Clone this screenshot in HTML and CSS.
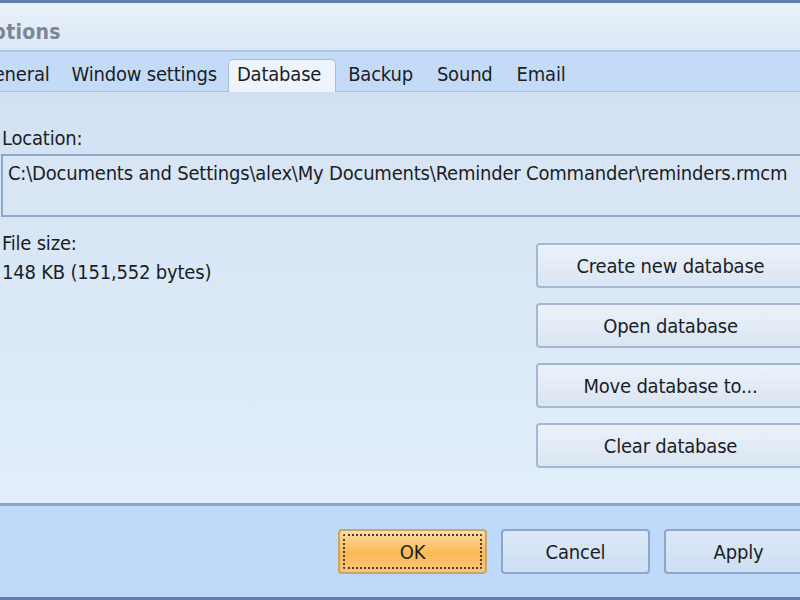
FILE: index.html
```html
<!DOCTYPE html>
<html lang="en">
<head>
  <meta charset="UTF-8" />
  <title>Options</title>
  <link rel="stylesheet" href="styles.css">
</head>
<body>

  <div class="window">
    <div class="titlebar">
      <span class="title">Options</span>
    </div>

    <!-- Tabs -->
    <div class="tabs">
      <span class="tab">General</span>
      <span class="tab">Window settings</span>
      <span class="tab active">Database</span>
      <span class="tab">Backup</span>
      <span class="tab">Sound</span>
      <span class="tab">Email</span>
    </div>

    <!-- Database page -->
    <div class="page">
      <div class="label">Location:</div>
      <div class="path">C:\Documents and Settings\alex\My Documents\Reminder Commander\reminders.rmcm</div>

      <div class="details">
        <div class="size">
          <div class="label">File size:</div>
          <div class="value">148 KB (151,552 bytes)</div>
        </div>
        <div class="actions">
          <button>Create new database</button>
          <button>Open database</button>
          <button>Move database to...</button>
          <button>Clear database</button>
        </div>
      </div>
    </div>

    <div class="footer">
      <button class="default"><span>OK</span></button>
      <button>Cancel</button>
      <button>Apply</button>
    </div>
  </div>

</body>
</html>
```

FILE: styles.css
```css
* {
  box-sizing: border-box;
  font-family: 'DejaVu Sans Condensed', 'DejaVu Sans', sans-serif;
  letter-spacing: -0.2px;
}

body {
  margin: 0;
  width: 800px;
  height: 600px;
  overflow: hidden;
  background-color: #bfd9fa;
}

.window {
  width: 850px;
  height: 600px;
  margin-left: -20px;
  display: flex;
  flex-direction: column;
  color: #1b1e24;
  font-size: 20px;
}

.titlebar {
  height: 50px;
  border-top: 3px solid #5f7fb0;
  background: linear-gradient(#e9f1fa, #dce8f6);
  display: flex;
  align-items: center;
}

.title {
  margin-left: -4px;
  padding-top: 10px;
  font-size: 21px;
  font-weight: bold;
  letter-spacing: 0.3px;
  color: #7d8794;
}

.tabs {
  height: 42px;
  border-top: 2px solid #aec6e6;
  border-bottom: 1px solid #a9c2e2;
  background-color: #c4dbf8;
  display: flex;
  align-items: flex-end;
}

.tab {
  padding: 0 11px 5px;
  white-space: nowrap;
}

.tab:first-child {
  margin-left: -11px;
}

.tab.active {
  margin-bottom: -1px;
  padding: 2px 14px 6px 8px;
  background-color: #eef4fc;
  border: 1px solid #a3bcdc;
  border-bottom: none;
  border-radius: 5px 5px 0 0;
}

.active ~ .tab {
  padding: 0 12px 5px;
}

.page {
  flex: 1;
  padding: 34px 25px 0 21px;
  background: linear-gradient(#d2e1f2, #e2effb);
  border-bottom: 3px solid #8aa4c8;
}

.label,
.value {
  line-height: 24px;
  padding-left: 1px;
}

.path {
  height: 63px;
  margin-top: 4px;
  padding: 5px;
  line-height: 24px;
  border: 2px solid #8ea8cb;
  background-color: #d8e5f4;
  white-space: nowrap;
}

.details {
  display: flex;
  justify-content: space-between;
  margin-top: 14px;
}

.size .value {
  margin-top: 5px;
}

.actions {
  width: 269px;
  margin-top: 12px;
  display: flex;
  flex-direction: column;
  gap: 15px;
}

button {
  height: 45px;
  font-size: 20px;
  color: #1b1e24;
  border: 2px solid #a4b8d2;
  border-radius: 4px;
  background: linear-gradient(#ecf2fa, #d9e5f2);
}

.footer {
  height: 94px;
  border-bottom: 3px solid #5f7fb0;
  display: flex;
  justify-content: flex-end;
  align-items: flex-start;
  gap: 14px;
  padding: 23px 17px 0 0;
}

.footer button {
  width: 149px;
  border-color: #8ea7c9;
  background: linear-gradient(#dce8f6, #cddff5);
}

.footer button.default {
  padding: 3px;
  border-color: #c6a56a;
  background: linear-gradient(#ffdca3, #fbb955 55%, #fdc57a);
}

.default span {
  display: flex;
  align-items: center;
  justify-content: center;
  height: 100%;
  border: 2px dotted #4a4030;
  border-radius: 2px;
}
```
